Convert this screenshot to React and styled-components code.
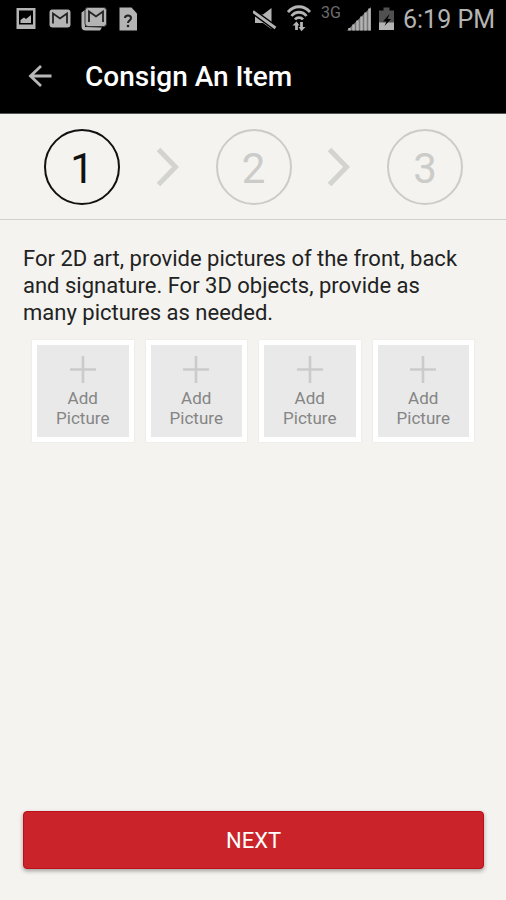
import React from "react";
import styled, { createGlobalStyle } from "styled-components";

const GlobalStyle = createGlobalStyle`
  *, *::before, *::after { box-sizing: border-box; }
  body {
    margin: 0;
    background: #f4f3ef;
    font-family: Roboto, "Noto Sans", sans-serif;
  }
`;

const Screen = styled.div`
  display: flex;
  flex-direction: column;
  min-height: 100vh;
  background: #f4f3ef;
`;

const StatusBar = styled.div`
  display: flex;
  align-items: center;
  justify-content: space-between;
  height: 38px;
  padding: 0 11px 0 13px;
  background: #000;
  color: #b4b4b4;
`;

const IconGroup = styled.div`
  display: flex;
  align-items: center;
  gap: ${(p) => p.$gap}px;
  svg { display: block; flex: none; }
`;

const Network = styled.span`
  width: 20px;
  padding-bottom: 12px;
  font-size: 16px;
  line-height: 16px;
  color: #6c6c6c;
`;

const Clock = styled.time`
  padding-top: 2px;
  font-size: 25px;
  line-height: 36px;
  white-space: nowrap;
`;

const Header = styled.header`
  display: flex;
  align-items: center;
  gap: 32px;
  height: 76px;
  padding: 2px 25px 0;
  background: #000;
  border-bottom: 1px solid #555;
`;

const BackButton = styled.button`
  display: flex;
  padding: 0;
  border: 0;
  background: none;
  color: #b8b8b8;
  cursor: pointer;
`;

const Title = styled.h1`
  margin: 0;
  font-size: 28px;
  line-height: 32px;
  font-weight: 500;
  color: #fff;
`;

const Steps = styled.ol`
  display: flex;
  align-items: center;
  justify-content: space-between;
  height: 106px;
  margin: 0;
  padding: 1px 43px 0 44px;
  list-style: none;
  border-bottom: 1px solid #d0d0cd;
`;

const Step = styled.li`
  display: flex;
  align-items: center;
  justify-content: center;
  width: 76px;
  height: 76px;
  padding-top: 3px;
  border: 2px solid ${(p) => (p.$active ? "#111" : "#cbcbc9")};
  border-radius: 50%;
  color: ${(p) => (p.$active ? "#111" : "#cbcbc9")};
  font-size: 42px;
  line-height: 50px;
`;

const Separator = styled.li`
  display: flex;
  color: #d3d3d0;
`;

const Main = styled.main`
  flex: 1;
  padding: 25px 23px;
`;

const Instructions = styled.p`
  margin: 0;
  padding-right: 16px;
  font-size: 22px;
  line-height: 27px;
  color: #222;
`;

const Pictures = styled.div`
  display: grid;
  grid-template-columns: repeat(4, 1fr);
  gap: 12px;
  padding: 14px 9px;
`;

const PictureButton = styled.button`
  display: flex;
  flex-direction: column;
  align-items: center;
  justify-content: center;
  gap: 5px;
  aspect-ratio: 1;
  padding: 2px 0 0;
  border: 5px solid #fff;
  background: #e9e9e9;
  box-shadow: 0 0 1px #ccc;
  color: #858585;
  font-family: inherit;
  font-size: 17px;
  line-height: 20px;
  cursor: pointer;
`;

const PictureLabel = styled.span`
  width: min-content;
`;

const Footer = styled.footer`
  padding: 0 22px 31px 23px;
`;

const NextButton = styled.button`
  display: block;
  width: 100%;
  height: 58px;
  padding: 0;
  border: 1px solid #be1018;
  border-radius: 4px;
  background: #ca242a;
  box-shadow: 0 2px 4px rgba(0, 0, 0, 0.35);
  color: #fff;
  font-family: inherit;
  font-size: 22px;
  cursor: pointer;
`;

const PhotoIcon = () => (
  <svg width="26" height="26" viewBox="0 0 26 26" aria-hidden="true">
    <path fill="currentColor" fillRule="evenodd" d="M3.500 2h19v21h-19zM6 4.500v14h14v-14z" />
    <path fill="currentColor" d="M7.500 17v-3l3.500-2.500 2 1.500 5-4v8z" />
  </svg>
);

const MailIcon = () => (
  <svg width="26" height="26" viewBox="0 0 26 26" aria-hidden="true">
    <rect x="2.500" y="3.500" width="21" height="18" rx="3" fill="currentColor" />
    <path fill="none" stroke="#222" strokeWidth="1.800" d="M6 17.500V7.500L13 12.500l7-5v10" />
  </svg>
);

const MailStackIcon = () => (
  <svg width="26" height="26" viewBox="0 0 26 26" aria-hidden="true">
    <path fill="currentColor" d="M0.500 6.500L4 4v17l17 .500-2 3H4.500a4 4 0 0 1-4-4z" />
    <rect x="4" y="1.500" width="21.500" height="19" rx="3" fill="currentColor" stroke="#333" />
    <path fill="none" stroke="#222" strokeWidth="1.800" d="M8 16V5.500l7 5 7-5V16" />
  </svg>
);

const UnknownFileIcon = () => (
  <svg width="26" height="26" viewBox="0 0 26 26" aria-hidden="true">
    <path fill="currentColor" d="M4.500 1.500h12l5.500 6v17H4.500z" />
    <path fill="none" stroke="#222" strokeWidth="2" d="M10 12c0-3.500 6-3.500 6 0 0 2.500-3 2.500-3 5" />
    <circle cx="13" cy="20" r="1.300" fill="#222" />
  </svg>
);

const MutedIcon = () => (
  <svg width="28" height="26" viewBox="0 0 28 26" aria-hidden="true">
    <path fill="currentColor" d="M2 8.500h8L18.500 2v21L10 17H2z" />
    <path stroke="#000" strokeWidth="5.500" d="M0 5.500l22.500 16.500" />
    <path stroke="currentColor" strokeWidth="2.800" d="M0 5.500l22.500 16.500" />
  </svg>
);

const WifiIcon = () => (
  <svg width="28" height="28" viewBox="0 0 28 28" aria-hidden="true">
    <g fill="none" stroke="currentColor" strokeWidth="2.800">
      <path d="M1 7C7 0 17 0 23 7" />
      <path d="M4.500 11c4-5 11-5 15 0" />
      <path d="M8 14.500c2-2.500 6-2.500 8 0" />
      <path d="M9.500 25v-7M14.500 17v7" />
    </g>
    <path fill="currentColor" d="M5.500 20.500l4-4 3 4zM11.500 22h7l-4 4.300z" />
  </svg>
);

const SignalIcon = () => (
  <svg width="26" height="26" viewBox="0 0 26 26" aria-hidden="true">
    <path fill="#777" d="M0 24.500L24 1v23.500z" />
    <path
      stroke="currentColor"
      strokeWidth="2.400"
      d="M2.500 24.500v-2.500M6.500 24.500v-6M10.500 24.500v-10M14.500 24.500v-14M18.500 24.500v-18M22.500 24.500V2.500"
    />
  </svg>
);

const BatteryIcon = () => (
  <svg width="18" height="26" viewBox="0 0 18 26" aria-hidden="true">
    <path fill="#505050" d="M4.500 1.500h6v3H15V17H0V4.500h4.500z" />
    <path fill="currentColor" d="M0 16.500h15v7.500H0z" />
    <path fill="#000" d="M10.500 8L4 15.500h3.500L5.500 20l6.500-7H8.500z" />
  </svg>
);

const BackIcon = () => (
  <svg width="28" height="28" viewBox="0 0 28 28" aria-hidden="true">
    <path fill="none" stroke="currentColor" strokeWidth="2.800" d="M26.500 13H5.500M16 3L5.500 13 16 23" />
  </svg>
);

const ChevronIcon = () => (
  <svg width="24" height="40" viewBox="0 0 24 40" aria-hidden="true">
    <path fill="none" stroke="currentColor" strokeWidth="5" d="M2.500 2.500L19.500 20l-17 17.500" />
  </svg>
);

const PlusIcon = () => (
  <svg width="26" height="27" viewBox="0 0 26 27" aria-hidden="true">
    <path stroke="#cbcbcb" strokeWidth="2.600" d="M0 13.500h26M13 0v27" />
  </svg>
);

const STEPS = [1, 2, 3];
const SLOTS = [1, 2, 3, 4];

export default function App() {
  return (
    <Screen>
      <GlobalStyle />
      <StatusBar>
        <IconGroup $gap={8}>
          <PhotoIcon />
          <MailIcon />
          <MailStackIcon />
          <UnknownFileIcon />
        </IconGroup>
        <IconGroup $gap={6}>
          <MutedIcon />
          <WifiIcon />
          <Network>3G</Network>
          <SignalIcon />
          <BatteryIcon />
          <Clock>6:19 PM</Clock>
        </IconGroup>
      </StatusBar>
      <Header>
        <BackButton type="button" aria-label="Back">
          <BackIcon />
        </BackButton>
        <Title>Consign An Item</Title>
      </Header>
      <Steps>
        {STEPS.map((n) => (
          <React.Fragment key={n}>
            {n > 1 && (
              <Separator aria-hidden="true">
                <ChevronIcon />
              </Separator>
            )}
            <Step $active={n === 1} aria-current={n === 1 ? "step" : undefined}>
              {n}
            </Step>
          </React.Fragment>
        ))}
      </Steps>
      <Main>
        <Instructions>
          For 2D art, provide pictures of the front, back and signature. For 3D
          objects, provide as many pictures as needed.
        </Instructions>
        <Pictures>
          {SLOTS.map((n) => (
            <PictureButton key={n} type="button">
              <PlusIcon />
              <PictureLabel>Add Picture</PictureLabel>
            </PictureButton>
          ))}
        </Pictures>
      </Main>
      <Footer>
        <NextButton type="button">NEXT</NextButton>
      </Footer>
    </Screen>
  );
}
